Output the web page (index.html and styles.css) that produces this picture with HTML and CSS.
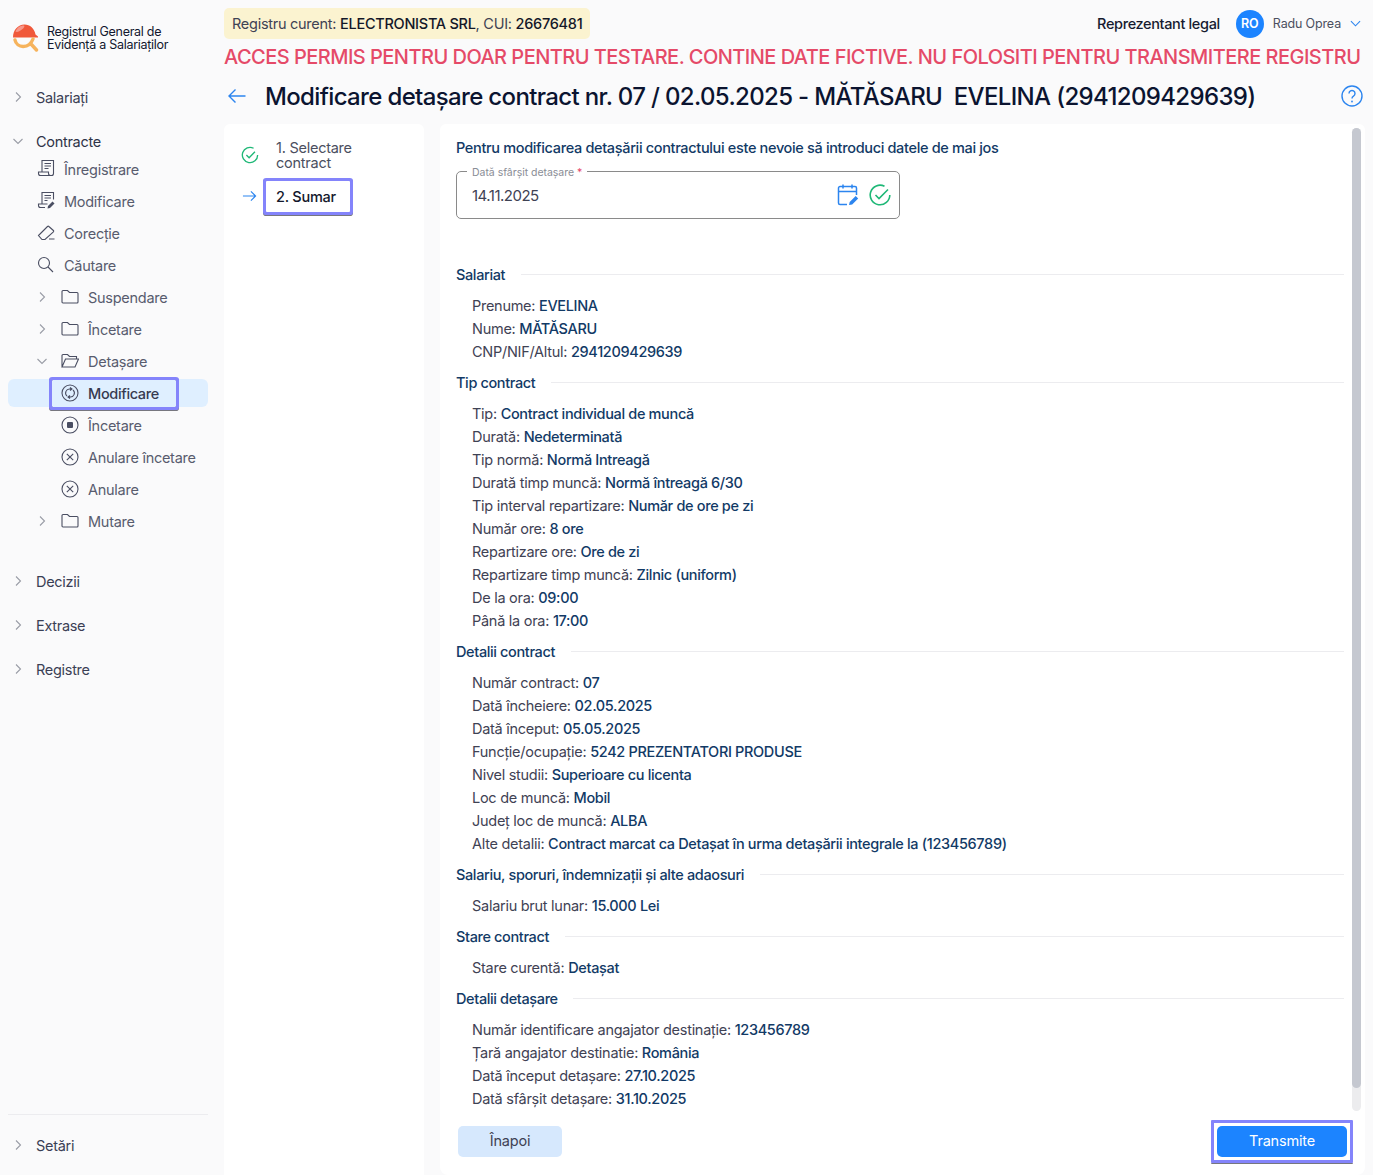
FILE: index.html
```html
<!DOCTYPE html>
<html lang="ro">
<head>
<meta charset="utf-8">
<title>Registrul General de Evidență a Salariaților</title>
<link rel="stylesheet" href="styles.css">
</head>
<body>
<div class="app">
  <aside class="sidebar">
    <div class="logo">
      <svg class="logo-mark" width="28" height="28" viewBox="0 0 28 28"><path d="M1 13.500C1 6 6 .5 12.500 .5c5.500 0 10 4 11 10l2.500 2v1H1z" fill="#f0583a"/><path d="M3.500 7.500C5 3.500 8.500 1.500 11.500 1.500c1.500 0 1 2-1 3.500-2 1.500-5.500 4-7 2.500z" fill="#f7978a"/><path d="M3 16c1.500 8 14 9.500 18-1M19.500 20.500l5 5.500" fill="none" stroke="#f6b35c" stroke-width="3.400" stroke-linecap="round"/></svg>
      <span class="logo-text">Registrul General de<br>Evidență a Salariaților</span>
    </div>
    <div class="nav-top">
      <svg class="chev" viewBox="0 0 16 16"><path d="M6 3.500 10.500 8 6 12.500"/></svg><span>Salariați</span>
    </div>
    <div class="nav-top nav-gap">
      <svg class="chev" viewBox="0 0 16 16"><path d="M3.500 6 8 10.500 12.500 6"/></svg><span class="strong">Contracte</span>
    </div>
    <div class="nav-sub nav-l1">
      <svg class="ic" viewBox="0 0 18 18"><path d="M5 11.500V.5h11.500v13a2 2 0 0 1-2 2H3.500a2 2 0 0 1-2-2V12h10v1.500a2 2 0 0 0 2 2M7.500 3.500h6.500M7.500 6h6.500M7.500 8.500h4"/></svg><span>Înregistrare</span>
    </div>
    <div class="nav-sub nav-l1">
      <svg class="ic" viewBox="0 0 18 18"><path d="M5 11.500V.5h11.500v7M8 15.500H3.500a2 2 0 0 1-2-2V12h9M7.500 3.500h6.500M7.500 6h6.500M7.500 8.500h3"/><path class="fill" d="m10.500 16.500.5-2.500 4.500-4.500 2 2-4.500 4.500z"/></svg><span>Modificare</span>
    </div>
    <div class="nav-sub nav-l1">
      <svg class="ic" viewBox="0 0 18 18"><path d="M1.500 11.500 10.500 2.500a1 1 0 0 1 1.400 0l4.500 4a1 1 0 0 1 0 1.400L8 15.500H5zM12 15h5.500"/></svg><span>Corecție</span>
    </div>
    <div class="nav-sub nav-l1">
      <svg class="ic" viewBox="0 0 18 18"><circle cx="7" cy="7" r="5.500"/><path d="m11 11 5 5"/></svg><span>Căutare</span>
    </div>
    <div class="nav-sub nav-l2">
      <svg class="chev" viewBox="0 0 16 16"><path d="M6 3.500 10.500 8 6 12.500"/></svg><svg class="ic" viewBox="0 0 18 18"><path d="M1 3.500a1 1 0 0 1 1-1h4.500l2 2H16a1 1 0 0 1 1 1v8.500a1 1 0 0 1-1 1H2a1 1 0 0 1-1-1z"/></svg><span>Suspendare</span>
    </div>
    <div class="nav-sub nav-l2">
      <svg class="chev" viewBox="0 0 16 16"><path d="M6 3.500 10.500 8 6 12.500"/></svg><svg class="ic" viewBox="0 0 18 18"><path d="M1 3.500a1 1 0 0 1 1-1h4.500l2 2H16a1 1 0 0 1 1 1v8.500a1 1 0 0 1-1 1H2a1 1 0 0 1-1-1z"/></svg><span>Încetare</span>
    </div>
    <div class="nav-sub nav-l2">
      <svg class="chev" viewBox="0 0 16 16"><path d="M3.500 6 8 10.500 12.500 6"/></svg><svg class="ic" viewBox="0 0 18 18"><path d="M1 14.500V3.500a1 1 0 0 1 1-1h4.500l2 2H15.500v2.500M1 15h13l3.500-8H4.500z"/></svg><span>Detașare</span>
    </div>
    <div class="nav-sub nav-l3 active">
      <span class="focus-link">
        <svg class="ic" viewBox="0 0 18 18"><circle cx="9" cy="9" r="8"/><path d="M6 12A4 4 0 0 1 9 5h1.500M9 3.500 11 5 9 6.500M12 6a4 4 0 0 1-3 7H7.500M9 11.500 7 13l2 1.500"/></svg><span>Modificare</span>
      </span>
    </div>
    <div class="nav-sub nav-l3">
      <svg class="ic" viewBox="0 0 18 18"><circle cx="9" cy="9" r="8"/><rect class="fill" x="6" y="6" width="6" height="6" rx="1"/></svg><span>Încetare</span>
    </div>
    <div class="nav-sub nav-l3">
      <svg class="ic" viewBox="0 0 18 18"><circle cx="9" cy="9" r="8"/><path d="m5.800 5.800 6.400 6.400M12.200 5.800l-6.400 6.400"/></svg><span>Anulare încetare</span>
    </div>
    <div class="nav-sub nav-l3">
      <svg class="ic" viewBox="0 0 18 18"><circle cx="9" cy="9" r="8"/><path d="m5.800 5.800 6.400 6.400M12.200 5.800l-6.400 6.400"/></svg><span>Anulare</span>
    </div>
    <div class="nav-sub nav-l2">
      <svg class="chev" viewBox="0 0 16 16"><path d="M6 3.500 10.500 8 6 12.500"/></svg><svg class="ic" viewBox="0 0 18 18"><path d="M1 3.500a1 1 0 0 1 1-1h4.500l2 2H16a1 1 0 0 1 1 1v8.500a1 1 0 0 1-1 1H2a1 1 0 0 1-1-1z"/></svg><span>Mutare</span>
    </div>
    <div class="nav-top nav-gap-lg">
      <svg class="chev" viewBox="0 0 16 16"><path d="M6 3.500 10.500 8 6 12.500"/></svg><span>Decizii</span>
    </div>
    <div class="nav-top nav-gap">
      <svg class="chev" viewBox="0 0 16 16"><path d="M6 3.500 10.500 8 6 12.500"/></svg><span>Extrase</span>
    </div>
    <div class="nav-top nav-gap">
      <svg class="chev" viewBox="0 0 16 16"><path d="M6 3.500 10.500 8 6 12.500"/></svg><span>Registre</span>
    </div>
    <div class="side-bottom">
      <div class="nav-top">
        <svg class="chev" viewBox="0 0 16 16"><path d="M6 3.500 10.500 8 6 12.500"/></svg><span>Setări</span>
      </div>
    </div>
  </aside>

  <main class="main">
    <header class="topbar">
      <div class="registry">Registru curent: <b>ELECTRONISTA SRL</b>, CUI: <b>26676481</b></div>
      <div class="user">
        <span class="role">Reprezentant legal</span>
        <span class="avatar">RO</span>
        <span class="uname">Radu Oprea</span>
        <svg class="uchev" viewBox="0 0 12 12"><path d="M1 3.500 6 8.500l5-5"/></svg>
      </div>
    </header>
    <div class="warning">ACCES PERMIS PENTRU DOAR PENTRU TESTARE. CONTINE DATE FICTIVE. NU FOLOSITI PENTRU TRANSMITERE REGISTRU</div>
    <div class="titlebar">
      <svg class="back" viewBox="0 0 18 16"><path d="M17.500 8H1M7.500 1.500 1 8l6.500 6.500"/></svg>
      <h1>Modificare detașare contract nr. 07 / 02.05.2025 - MĂTĂSARU&nbsp; EVELINA (2941209429639)</h1>
      <svg class="help" viewBox="0 0 22 22"><circle cx="11" cy="11" r="10"/><path d="M8 8.500a3 3 0 1 1 4.500 2.600c-1 .6-1.500 1.200-1.500 2.400"/><circle class="dot" cx="11" cy="16.500" r=".9"/></svg>
    </div>
    <div class="panels">
      <nav class="steps">
        <div class="step step-done">
          <svg class="step-ok" viewBox="0 0 20 20"><path d="M18.500 10A8.500 8.500 0 1 1 14 2.500"/><path d="m6 10 3 3 6.500-6.500"/></svg>
          <span class="step-label">1. Selectare contract</span>
        </div>
        <div class="step step-current">
          <svg class="step-arrow" viewBox="0 0 16 12"><path d="M1 6h13.500M9.500 1l5 5-5 5"/></svg>
          <span class="step-focus">2. Sumar</span>
        </div>
      </nav>
      <section class="card">
        <div class="scroll">
          <p class="lead">Pentru modificarea detașării contractului este nevoie să introduci datele de mai jos</p>
          <div class="field">
            <span class="field-label">Dată sfârșit detașare <i>*</i></span>
            <span class="field-value">14.11.2025</span>
            <svg class="cal" viewBox="0 0 22 22"><path d="M10 20.500H3a1.500 1.500 0 0 1-1.500-1.500V4A1.500 1.500 0 0 1 3 2.500h15A1.500 1.500 0 0 1 19.500 4v7M1.500 7.500h18M6 .5v4M15 .5v4"/><path class="fill" d="m12 21 .7-3 6-6 2.500 2.500-6 6z"/></svg>
            <svg class="ok" viewBox="0 0 22 22"><path d="M20.800 11A9.800 9.800 0 1 1 15.500 2.300"/><path d="m6.500 11 3.500 3.500 9-9"/></svg>
          </div>

          <div class="sec first"><h2>Salariat</h2></div>
          <ul>
            <li>Prenume: <b>EVELINA</b></li>
            <li>Nume: <b>MĂTĂSARU</b></li>
            <li>CNP/NIF/Altul: <b>2941209429639</b></li>
          </ul>
          <div class="sec"><h2>Tip contract</h2></div>
          <ul>
            <li>Tip: <b>Contract individual de muncă</b></li>
            <li>Durată: <b>Nedeterminată</b></li>
            <li>Tip normă: <b>Normă Intreagă</b></li>
            <li>Durată timp muncă: <b>Normă întreagă 6/30</b></li>
            <li>Tip interval repartizare: <b>Număr de ore pe zi</b></li>
            <li>Număr ore: <b>8 ore</b></li>
            <li>Repartizare ore: <b>Ore de zi</b></li>
            <li>Repartizare timp muncă: <b>Zilnic (uniform)</b></li>
            <li>De la ora: <b>09:00</b></li>
            <li>Până la ora: <b>17:00</b></li>
          </ul>
          <div class="sec"><h2>Detalii contract</h2></div>
          <ul>
            <li>Număr contract: <b>07</b></li>
            <li>Dată încheiere: <b>02.05.2025</b></li>
            <li>Dată început: <b>05.05.2025</b></li>
            <li>Funcție/ocupație: <b>5242 PREZENTATORI PRODUSE</b></li>
            <li>Nivel studii: <b>Superioare cu licenta</b></li>
            <li>Loc de muncă: <b>Mobil</b></li>
            <li>Județ loc de muncă: <b>ALBA</b></li>
            <li>Alte detalii: <b>Contract marcat ca Detașat în urma detașării integrale la (123456789)</b></li>
          </ul>
          <div class="sec"><h2>Salariu, sporuri, îndemnizații și alte adaosuri</h2></div>
          <ul>
            <li>Salariu brut lunar: <b>15.000 Lei</b></li>
          </ul>
          <div class="sec"><h2>Stare contract</h2></div>
          <ul>
            <li>Stare curentă: <b>Detașat</b></li>
          </ul>
          <div class="sec"><h2>Detalii detașare</h2></div>
          <ul>
            <li>Număr identificare angajator destinație: <b>123456789</b></li>
            <li>Țară angajator destinatie: <b>România</b></li>
            <li>Dată început detașare: <b>27.10.2025</b></li>
            <li>Dată sfârșit detașare: <b>31.10.2025</b></li>
          </ul>
        </div>
        <div class="scrollbar"><div class="thumb"></div></div>
        <div class="actions">
          <button class="btn-back">Înapoi</button>
          <span class="send-focus"><button class="btn-send">Transmite</button></span>
        </div>
      </section>
    </div>
  </main>
</div>
</body>
</html>
```
FILE: styles.css
```css
* { box-sizing: border-box; }
html, body { margin: 0; height: 100%; }
body {
  background: #fafafb;
  font-family: Inter, "Liberation Sans", sans-serif;
  color: #3f4254;
  overflow: hidden;
}
.app { display: flex; height: 1175px; }

/* sidebar */
.sidebar {
  width: 224px;
  flex: none;
  padding: 0 16px 16px 8px;
  display: flex;
  flex-direction: column;
  font-size: 14.5px;
  letter-spacing: -.27px;
  color: #44485c;
}
.logo { display: flex; align-items: center; gap: 7px; height: 83px; padding: 0 0 8px 4px; }
.logo-mark { width: 28px; height: 28px; flex: none; }
.logo-text { font-size: 12.5px; line-height: 13px; color: #12172e; letter-spacing: -.27px; }
.nav-top { display: flex; align-items: center; height: 28px; gap: 10px; padding-left: 2px; flex: none; }
.nav-top span { color: #3a3f55; letter-spacing: -.3px; }
.nav-top .strong { color: #2e3347; }
.nav-gap { margin-top: 16px; }
.nav-gap-lg { margin-top: 32px; }
.chev { width: 16px; height: 16px; flex: none; fill: none; stroke: #9a9da6; stroke-width: 1.1; }
.nav-sub { display: flex; align-items: center; height: 28px; flex: none; margin-top: 4px; border-radius: 6px; color: #585c6e; }
.nav-top + .nav-sub { margin-top: 0; }
.ic { width: 18px; height: 18px; flex: none; fill: none; stroke: #4a4e62; stroke-width: 1.1; }
.ic .fill { fill: #4a4e62; stroke: none; }
.nav-l1 { padding-left: 29px; gap: 9px; }
.nav-l2 { padding-left: 26px; }
.nav-l2 .ic { margin-left: 11px; margin-right: 9px; }
.nav-l3 { padding-left: 53px; gap: 9px; }
.active { background: #dfefff; padding-left: 44px; color: #363a50; font-weight: 500; letter-spacing: -.35px; }
.focus-link {
  display: flex; align-items: center; gap: 9px;
  height: 27px; width: 124px; padding-left: 9px;
  box-shadow: 0 0 0 3px #8484fb, 0 1px 0 3px #77777f;
  border-radius: 1px;
}
.side-bottom { margin-top: auto; border-top: 1px solid #ececef; padding-top: 16px; }

/* main */
.main { flex: 1; min-width: 0; display: flex; flex-direction: column; height: 1175px; padding-right: 8px; }
.topbar { display: flex; justify-content: space-between; align-items: center; padding-top: 8px; }
.registry { background: #fbf3d0; border-radius: 5px; height: 31px; padding: 0 8px; font-size: 14.5px; line-height: 31px; color: #3f4254; letter-spacing: -.27px; }
.registry b { font-weight: 500; color: #141829; }
.user { display: flex; align-items: center; height: 29px; padding-right: 4px; }
.role { font-size: 14.5px; font-weight: 500; color: #161b30; letter-spacing: -.36px; margin-right: 16px; }
.avatar { width: 28px; height: 28px; border-radius: 50%; background: #1c84ff; color: #fff; font-size: 12.500px; font-weight: 600; letter-spacing: -.2px; display: flex; align-items: center; justify-content: center; margin-right: 9px; }
.uname { font-size: 12.5px; letter-spacing: -.15px; color: #4b4f60; margin-right: 9px; }
.uchev { width: 11px; height: 11px; fill: none; stroke: #2c85ef; stroke-width: 1.2; }
.warning { font-size: 20px; line-height: 24px; margin-top: 6px; font-weight: 500; color: #e54a68; white-space: nowrap; letter-spacing: -.53px; }
.titlebar { display: flex; align-items: center; height: 36px; margin-top: 9px; }
.back { width: 18px; height: 16px; margin-left: 4px; fill: none; stroke: #2c85ef; stroke-width: 1.4; flex: none; }
.titlebar h1 { margin: 0 0 0 19px; font-size: 24px; font-weight: 500; color: #0b1430; white-space: nowrap; flex: 1; letter-spacing: -.645px; }
.help { width: 22px; height: 22px; flex: none; fill: none; stroke: #2c85ef; stroke-width: 1.4; margin-right: 2px; }
.help .dot { fill: #2c85ef; stroke: none; }

.panels { display: flex; gap: 16px; flex: 1; min-height: 0; margin-top: 10px; }
.steps { width: 200px; flex: none; background: #fff; border-radius: 6px 6px 0 0; padding: 16px 0 0 17px; }
.step { display: flex; align-items: center; }
.step-done { height: 30px; }
.step-ok { width: 18px; height: 18px; flex: none; fill: none; stroke: #1fb877; stroke-width: 1.5; }
.step-label { margin-left: 17px; width: 110px; font-size: 14.5px; line-height: 15px; color: #4b4f60; letter-spacing: -.25px; }
.step-current { margin-top: 11px; height: 31px; }
.step-arrow { width: 15px; height: 12px; margin: 0 0 2px 1px; flex: none; fill: none; stroke: #2c85ef; stroke-width: 1.2; }
.step-focus {
  margin-left: 9px; width: 84px; height: 31px; padding-left: 10px;
  font-size: 14.5px; font-weight: 500; line-height: 31px; color: #14182c; letter-spacing: -.25px;
  background: #fff; box-shadow: 0 0 0 3px #8484fb, 0 1px 0 3px #77777f; border-radius: 1px;
}

.card { flex: 1; min-width: 0; background: #fff; border-radius: 6px 6px 8px 8px; position: relative; display: flex; flex-direction: column; }
.scroll { flex: 1; min-height: 0; overflow: hidden; padding: 12px 21px 0 16px; font-size: 15px; }
.lead { margin: 0; font-size: 14.5px; line-height: 24px; font-weight: 500; color: #123a66; letter-spacing: -.34px; }
.field { margin-top: 11px; height: 48px; width: 444px; border: 1px solid #8a8a8a; border-radius: 5px; position: relative; display: flex; align-items: center; padding-left: 15px; }
.field-label { position: absolute; left: 10px; top: -6px; background: #fff; padding: 0 5px; font-size: 10.5px; line-height: 14px; color: #8a8d96; letter-spacing: -.03px; }
.field-label i { font-style: normal; color: #e5486a; }
.field-value { flex: 1; font-size: 15px; color: #3f4254; letter-spacing: -.5px; }
.cal { width: 22px; height: 22px; fill: none; stroke: #2c85ef; stroke-width: 1.5; margin-right: 10px; }
.cal .fill { fill: #2c85ef; stroke: none; }
.ok { width: 22px; height: 22px; fill: none; stroke: #1fb877; stroke-width: 1.6; margin-right: 8px; }
.sec { display: flex; align-items: center; height: 23px; margin-top: 8px; }
.sec.first { margin-top: 44px; }
.sec::after { content: ""; flex: 1; border-top: 1px solid #ececef; margin-left: 15.5px; }
.sec h2 { margin: 0; font-size: 14.5px; font-weight: 500; color: #123a66; letter-spacing: -.37px; }
ul { list-style: none; margin: 8px 0 0; padding: 0 0 0 16px; }
li { height: 23px; line-height: 23px; color: #3f4254; font-size: 14.5px; letter-spacing: -.275px; white-space: nowrap; }
li b { font-weight: 500; color: #123a66; letter-spacing: -.34px; }

.scrollbar { position: absolute; left: 912px; top: 4px; width: 9px; height: 983px; background: #ececee; border-radius: 5px; }
.thumb { width: 9px; height: 960px; background: #c5c8d0; border-radius: 5px; }
.actions { flex: none; display: flex; justify-content: space-between; align-items: center; height: 64px; padding: 0 12px 4px 18px; }
button { font-family: inherit; border: 0; font-size: 14.5px; letter-spacing: -.2px; height: 31px; padding: 0 0 2px; border-radius: 5px; }
.btn-back { width: 104px; background: #d6e8fd; color: #3f4254; }
.send-focus { display: flex; border: 3px solid #8484fb; padding: 3px; box-shadow: 0 1px 0 #77777f; border-radius: 1px; }
.btn-send { width: 130px; background: #1c84ff; color: #fff; }
```
